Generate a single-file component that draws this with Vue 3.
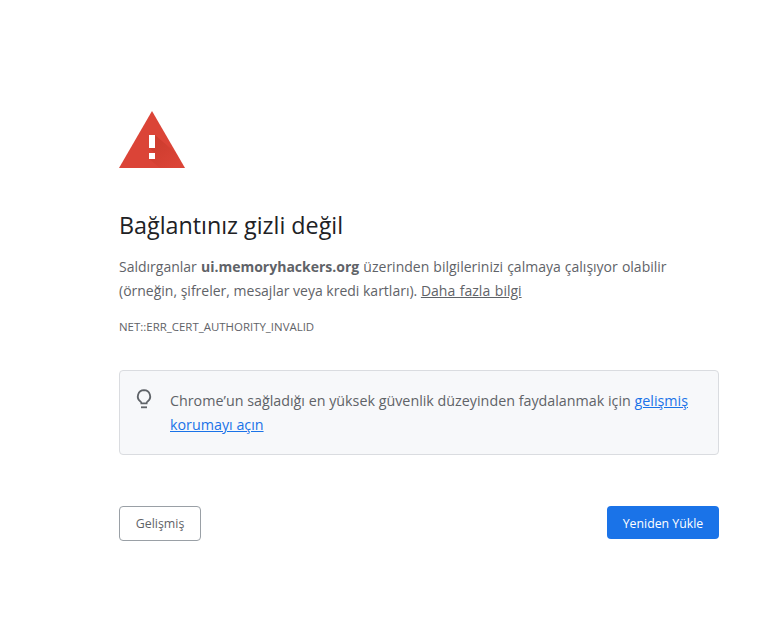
<template>
  <div class="page">
    <div class="content">
      <svg class="warning" viewBox="0 0 66 58" width="66" height="58">
        <defs>
          <linearGradient id="fold" x1="0.15" y1="0.1" x2="0.8" y2="0.9">
            <stop offset="0" stop-color="#a52714" stop-opacity="0.28" />
            <stop offset="1" stop-color="#a52714" stop-opacity="0" />
          </linearGradient>
        </defs>
        <path d="M33 0 L66 57 L0 57 Z" fill="#db4437" />
        <path d="M36 24 L57 42 L66 57 L41 57 L30 48 L36 48 L36 42 L30 37 Z" fill="url(#fold)" />
        <rect x="30" y="24" width="6" height="13" fill="#fff" />
        <rect x="30" y="42" width="6" height="6" fill="#fff" />
      </svg>

      <h1 class="title">Bağlantınız gizli değil</h1>
      <p class="message">
        <span class="first-line">Saldırganlar <strong>ui.memoryhackers.org</strong> üzerinden bilgilerinizi çalmaya çalışıyor olabilir</span>
        (örneğin, şifreler, mesajlar veya kredi kartları). <a class="more" href="#">Daha fazla bilgi</a>
      </p>
      <div class="code">NET::ERR_CERT_AUTHORITY_INVALID</div>

      <div class="tip">
        <svg class="bulb" viewBox="0 0 18 22" width="18" height="22">
          <path d="M9 2.2 a6.2 6.2 0 0 0 -3.6 11.2 c0.7 0.6 1 1.2 1 2 h5.2 c0 -0.8 0.3 -1.4 1 -2 A6.2 6.2 0 0 0 9 2.2 Z" fill="none" stroke="#5f6368" stroke-width="1.8" />
          <rect x="6" y="18.4" width="6" height="1.8" fill="#5f6368" />
        </svg>
        <p class="tip-text">
          Chrome’un sağladığı en yüksek güvenlik düzeyinden faydalanmak için <a href="#">gelişmiş korumayı açın</a>
        </p>
      </div>

      <div class="actions">
        <button class="btn advanced">Gelişmiş</button>
        <button class="btn reload">Yeniden Yükle</button>
      </div>
    </div>
  </div>
</template>

<script setup>
</script>

<style scoped>
.page {
  width: 783px;
  height: 623px;
  background: #fff;
  overflow: hidden;
  font-family: "Open Sans", "Noto Sans", sans-serif;
  color: #5f6368;
}

.content {
  width: 600px;
  margin-left: 119px;
  padding-top: 111px;
}

.warning {
  display: block;
}

.title {
  margin: 42px 0 0;
  font-size: 23.3px;
  line-height: 29px;
  font-weight: 400;
  color: #202124;
}

.message {
  margin: 15px 0 0;
  font-size: 14px;
  line-height: 24px;
}

.first-line {
  display: block;
  word-spacing: 0.5px;
  white-space: nowrap;
}

.message strong {
  font-weight: 700;
}

.more {
  color: #5f6368;
  word-spacing: 1px;
}

.code {
  margin-top: 16px;
  font-size: 11.45px;
  line-height: 16px;
  text-transform: uppercase;
}

.tip {
  display: flex;
  margin-top: 35px;
  height: 85px;
  box-sizing: border-box;
  padding: 18px 24px 0 15px;
  gap: 17px;
  background: #f7f8fa;
  border: 1px solid #dadce0;
  border-radius: 4px;
}

.bulb {
  flex: none;
  margin-top: -1px;
}

.tip-text {
  margin: 0;
  font-size: 14.3px;
  line-height: 24px;
}

.tip-text a {
  color: #1a73e8;
}

.actions {
  display: flex;
  justify-content: space-between;
  align-items: flex-start;
  margin-top: 51px;
}

.btn {
  font-family: inherit;
  font-size: 12.4px;
  border-radius: 4px;
  box-sizing: border-box;
}

.advanced {
  width: 82px;
  height: 35px;
  background: #fff;
  color: #5f6368;
  border: 1px solid #9aa0a6;
}

.reload {
  width: 112px;
  height: 33px;
  padding-top: 3px;
  font-size: 12.3px;
  background: #1a73e8;
  color: #fff;
  border: none;
}
</style>
